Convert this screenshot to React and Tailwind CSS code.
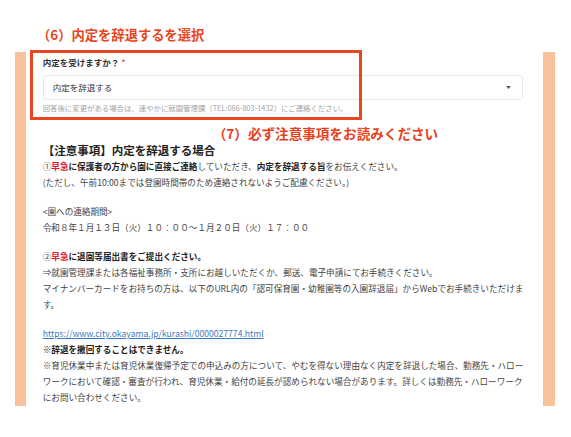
import React from "react";

export default function App() {
  const body = "whitespace-nowrap leading-[16px]";
  return (
    <div className="relative w-[571px] h-[437px] bg-white overflow-hidden font-['Noto_Sans_CJK_JP',sans-serif] text-[#444]">
      <div className="h-[52px] pt-[26px] pl-[37px]">
        <div className="text-[13.3px] leading-[18px] font-semibold text-[#e8461e] whitespace-nowrap">
          （6）内定を辞退するを選択
        </div>
      </div>
      <div className="flex h-[354px]">
        <div className="ml-[15px] w-[11px] bg-[#f8c39b]" />
        <div className="flex-1 pl-[17px] pr-[20px] pt-[4px] text-[8.6px]">
          <div className="text-[8.5px] leading-[12px] font-bold text-[#333] whitespace-nowrap">
            内定を受けますか？ <span className="text-[#e06a6a]">*</span>
          </div>
          <div className="mt-[7px] h-[25px] border border-[#e6e8ec] rounded-[3px] flex items-center justify-between pl-[9px] pr-[11px]">
            <span className="text-[8.5px] text-[#333]">内定を辞退する</span>
            <svg width="5" height="3" viewBox="0 0 6 4">
              <path d="M0 0 L6 0 L3 4 Z" fill="#4b5563" />
            </svg>
          </div>
          <div className="mt-[3px] leading-[10px] text-[7.4px] text-[#a3a3a3] whitespace-nowrap">
            回答後に変更がある場合は、速やかに就園管理課（TEL:086-803-1432）にご連絡ください。
          </div>
          <div className="mt-[11px] pl-[170px] text-[13.6px] leading-[18px] font-semibold text-[#e8401c] whitespace-nowrap">
            （7）必ず注意事項をお読みください
          </div>
          <div className="text-[11.5px] leading-[16px] font-bold text-[#222] whitespace-nowrap">
            【注意事項】内定を辞退する場合
          </div>
          <div>
            <div className={body}>
              ①<span className="font-bold text-[#e0162b]">早急</span>
              <span className="font-bold text-[#222]">に保護者の方から園に直接ご連絡</span>していただき、
              <span className="font-bold text-[#222]">内定を辞退する旨</span>をお伝えください。
            </div>
            <div className={body}>(ただし、午前10:00までは登園時間帯のため連絡されないようご配慮ください。)</div>
          </div>
          <div className="mt-[13px]">
            <div className={body}>&lt;園への連絡期間&gt;</div>
            <div className={body}>令和８年１月１３日（火）１０：００～１月２０日（火）１７：００</div>
          </div>
          <div className="mt-[13px]">
            <div className={body}>
              ②<span className="font-bold text-[#e0162b]">早急</span>
              <span className="font-bold text-[#222]">に退園等届出書をご提出ください。</span>
            </div>
            <div className={body}>⇒就園管理課または各福祉事務所・支所にお越しいただくか、郵送、電子申請にてお手続きください。</div>
            <div className={body}>マイナンバーカードをお持ちの方は、以下のURL内の「認可保育園・幼稚園等の入園辞退届」からWebでお手続きいただけま</div>
            <div className={body}>す。</div>
          </div>
          <div className="mt-[13px]">
            <div className={body}>
              <span className="text-[#3b7bbf] underline">https://www.city.okayama.jp/kurashi/0000027774.html</span>
            </div>
            <div className={`${body} font-bold text-[#222]`}>※辞退を撤回することはできません。</div>
            <div className={body}>※育児休業中または育児休業復帰予定での申込みの方について、やむを得ない理由なく内定を辞退した場合、勤務先・ハロー</div>
            <div className={body}>ワークにおいて確認・審査が行われ、育児休業・給付の延長が認められない場合があります。詳しくは勤務先・ハローワーク</div>
            <div className={body}>にお問い合わせください。</div>
          </div>
        </div>
        <div className="w-[12px] mr-[16px] bg-[#f8c39b]" />
      </div>
      <div className="absolute left-[30px] top-[50px] w-[332px] h-[70px] border-[3px] border-[#e8461e]" />
    </div>
  );
}
